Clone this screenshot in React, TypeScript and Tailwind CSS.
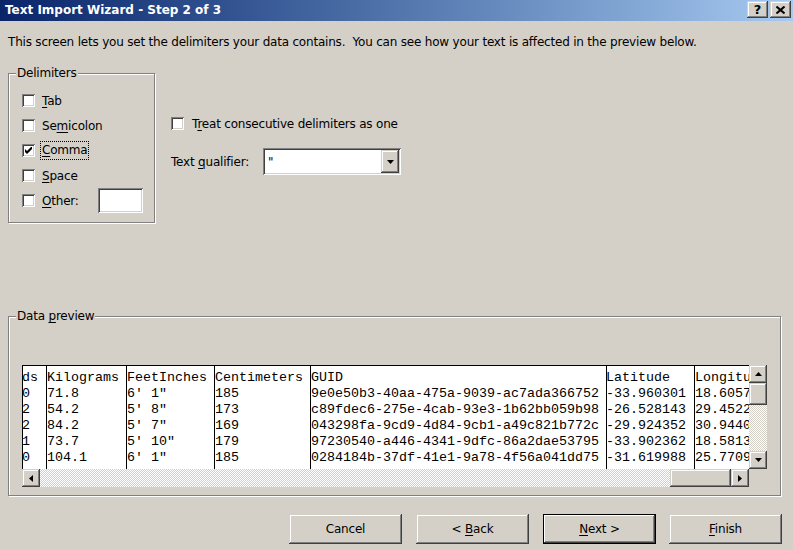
import React from "react";

const raised =
  "shadow-[inset_-1px_-1px_#404040,inset_1px_1px_#d4d0c8,inset_-2px_-2px_#808080,inset_2px_2px_#ffffff]";
const sunken =
  "shadow-[inset_1px_1px_#808080,inset_-1px_-1px_#ffffff,inset_2px_2px_#404040,inset_-2px_-2px_#d4d0c8]";
const hatch =
  "bg-[repeating-conic-gradient(#ffffff_0_25%,#d4d0c8_0_50%)] bg-[length:2px_2px]";

function U({ children }: { children: React.ReactNode }) {
  return <span className="underline underline-offset-[2px] decoration-1">{children}</span>;
}

function CheckBox({ checked = false }: { checked?: boolean }) {
  return (
    <div className={`w-[13px] h-[13px] bg-white ${sunken} flex items-center justify-center shrink-0`}>
      {checked && (
        <svg width="7" height="7" viewBox="0 0 7 7">
          <path d="M0 2 L2 4 L7 -1 L7 2 L2 7 L0 5 Z" fill="#000" />
        </svg>
      )}
    </div>
  );
}

function Arrow({ dir }: { dir: "up" | "down" | "left" | "right" }) {
  const pts: Record<string, string> = {
    up: "3.5,0 7,4 0,4",
    down: "0,0 7,0 3.5,4",
    left: "4,0 4,7 0,3.5",
    right: "0,0 0,7 4,3.5",
  };
  const vertical = dir === "up" || dir === "down";
  return (
    <svg width={vertical ? 7 : 4} height={vertical ? 4 : 7} viewBox={vertical ? "0 0 7 4" : "0 0 4 7"}>
      <polygon points={pts[dir]} fill="#000" />
    </svg>
  );
}

const columns: { w: string; cls?: string; cells: string[] }[] = [
  { w: "w-[24px]", cls: "-ml-[1px]", cells: ["ds", "0", "2", "2", "1", "0"] },
  { w: "w-[80px]", cells: ["Kilograms", "71.8", "54.2", "84.2", "73.7", "104.1"] },
  { w: "w-[88px]", cells: ["FeetInches", "6' 1\"", "5' 8\"", "5' 7\"", "5' 10\"", "6' 1\""] },
  { w: "w-[96px]", cells: ["Centimeters", "185", "173", "169", "179", "185"] },
  {
    w: "w-[296px]",
    cells: [
      "GUID",
      "9e0e50b3-40aa-475a-9039-ac7ada366752",
      "c89fdec6-275e-4cab-93e3-1b62bb059b98",
      "043298fa-9cd9-4d84-9cb1-a49c821b772c",
      "97230540-a446-4341-9dfc-86a2dae53795",
      "0284184b-37df-41e1-9a78-4f56a041dd75",
    ],
  },
  { w: "w-[88px]", cls: "-ml-[1px]", cells: ["Latitude", "-33.960301", "-26.528143", "-29.924352", "-33.902362", "-31.619988"] },
  { w: "w-[80px]", cells: ["Longitude", "18.605721", "29.452210", "30.944021", "18.581310", "25.770912"] },
];

export default function App() {
  return (
    <div
      className="w-[793px] h-[550px] bg-[#d4d0c8] flex flex-col text-black text-[12px] leading-[14px] tracking-[-0.2px] overflow-hidden"
      style={{ fontFamily: "'DejaVu Sans', 'Liberation Sans', sans-serif" }}
    >
      {/* Title bar */}
      <div className="h-[21px] shrink-0 bg-linear-to-r from-[#0a246a] to-[#a6caf0] flex items-start justify-between pl-[5px] pr-[2px]">
        <span className="text-white font-bold text-[12px] leading-[21px] tracking-normal">
          Text Import Wizard - Step 2 of 3
        </span>
        <div className="flex gap-[2px] pt-[1px]">
          <div className={`w-[21px] h-[17px] bg-[#d4d0c8] ${raised} flex items-center justify-center font-bold text-[13px] leading-none tracking-normal`}>
            ?
          </div>
          <div className={`w-[21px] h-[17px] bg-[#d4d0c8] ${raised} flex items-center justify-center`}>
            <svg width="9" height="8" viewBox="0 0 9 8">
              <path d="M0.5 0.5 L8.5 7.5 M8.5 0.5 L0.5 7.5" stroke="#000" strokeWidth="2" />
            </svg>
          </div>
        </div>
      </div>

      {/* Description */}
      <p className="mt-[14px] ml-[8px]">
        This screen lets you set the delimiters your data contains.&nbsp; You can see how your text is affected in the preview below.
      </p>

      {/* Options */}
      <div className="flex mt-[17px] ml-[8px]">
        <fieldset className="w-[147px] h-[157px] border border-[#808080] shadow-[inset_1px_1px_#ffffff,1px_1px_#ffffff] pl-[13px] pt-[8px]">
          <legend className="-ml-[6px] px-[1px] bg-[#d4d0c8]">Delimiters</legend>
          <div className="flex flex-col">
            <div className="h-[25px] flex items-center gap-[7px]">
              <CheckBox />
              <span><U>T</U>ab</span>
            </div>
            <div className="h-[25px] flex items-center gap-[7px]">
              <CheckBox />
              <span>Se<U>m</U>icolon</span>
            </div>
            <div className="h-[25px] flex items-center gap-[5px]">
              <CheckBox checked />
              <span className="border border-dotted border-black px-[1px] leading-[17px]"><U>C</U>omma</span>
            </div>
            <div className="h-[25px] flex items-center gap-[7px]">
              <CheckBox />
              <span><U>S</U>pace</span>
            </div>
            <div className="h-[25px] flex items-center gap-[7px]">
              <CheckBox />
              <span className="w-[49px]"><U>O</U>ther:</span>
              <div className={`w-[45px] h-[25px] bg-white ${sunken}`} />
            </div>
          </div>
        </fieldset>

        <div className="ml-[16px] mt-[45px] flex flex-col">
          <div className="h-[25px] flex items-center gap-[8px]">
            <CheckBox />
            <span>T<U>r</U>eat consecutive delimiters as one</span>
          </div>
          <div className="mt-[12px] flex items-center">
            <span className="w-[92px]">Text <U>q</U>ualifier:</span>
            <div className={`w-[138px] h-[27px] bg-white ${sunken} flex items-center justify-between p-[2px]`}>
              <span className="pl-[3px]">"</span>
              <div className={`w-[18px] h-[23px] bg-[#d4d0c8] ${raised} flex items-center justify-center`}>
                <Arrow dir="down" />
              </div>
            </div>
          </div>
        </div>
      </div>

      {/* Data preview */}
      <fieldset className="mt-[86px] ml-[8px] w-[773px] h-[187px] border border-[#808080] shadow-[inset_1px_1px_#ffffff,1px_1px_#ffffff] pl-[13px] pt-[42px]">
        <legend className="-ml-[6px] px-[1px] bg-[#d4d0c8]">
          Data <U>p</U>review
        </legend>
        <div className="flex flex-col w-[745px]">
          <div className="flex h-[104px]">
            <div
              className="w-[727px] h-[104px] bg-white border-t border-l border-black overflow-hidden flex tracking-normal"
              style={{ fontFamily: "'Liberation Mono', monospace", fontSize: "13.333px" }}
            >
              {columns.map((c, i) => (
                <div
                  key={i}
                  className={`${c.w} shrink-0 h-full ${i < columns.length - 1 ? "border-r border-black" : ""} overflow-hidden pt-[4px]`}
                >
                  <div className={`${c.cls ?? ""} leading-[16px] whitespace-pre`}>
                    {c.cells.map((t, j) => (
                      <div key={j}>{t}</div>
                    ))}
                  </div>
                </div>
              ))}
            </div>
            <div className={`w-[18px] h-[104px] flex flex-col ${hatch}`}>
              <div className={`w-[18px] h-[18px] bg-[#d4d0c8] ${raised} flex items-center justify-center`}>
                <Arrow dir="up" />
              </div>
              <div className={`w-[18px] h-[22px] bg-[#d4d0c8] ${raised}`} />
              <div className="flex-1" />
              <div className={`w-[18px] h-[18px] bg-[#d4d0c8] ${raised} flex items-center justify-center`}>
                <Arrow dir="down" />
              </div>
            </div>
          </div>
          <div className="flex h-[18px]">
            <div className={`w-[727px] h-[18px] flex ${hatch}`}>
              <div className={`w-[18px] h-[18px] bg-[#d4d0c8] ${raised} flex items-center justify-center`}>
                <Arrow dir="left" />
              </div>
              <div className="flex-1" />
              <div className={`w-[61px] h-[18px] bg-[#d4d0c8] ${raised}`} />
              <div className={`w-[18px] h-[18px] bg-[#d4d0c8] ${raised} flex items-center justify-center`}>
                <Arrow dir="right" />
              </div>
            </div>
          </div>
        </div>
      </fieldset>

      {/* Buttons */}
      <div className="mt-[18px] ml-[289px] flex gap-[14px]">
        <button className={`w-[113px] h-[30px] bg-[#d4d0c8] ${raised}`}>Cancel</button>
        <button className={`w-[113px] h-[30px] bg-[#d4d0c8] ${raised}`}>
          &lt; <U>B</U>ack
        </button>
        <button className="w-[113px] h-[30px] bg-[#d4d0c8] border border-black shadow-[inset_-1px_-1px_#404040,inset_1px_1px_#ffffff,inset_-2px_-2px_#808080]">
          <U>N</U>ext &gt;
        </button>
        <button className={`w-[113px] h-[30px] bg-[#d4d0c8] ${raised} -ml-px`}>
          <U>F</U>inish
        </button>
      </div>
    </div>
  );
}
